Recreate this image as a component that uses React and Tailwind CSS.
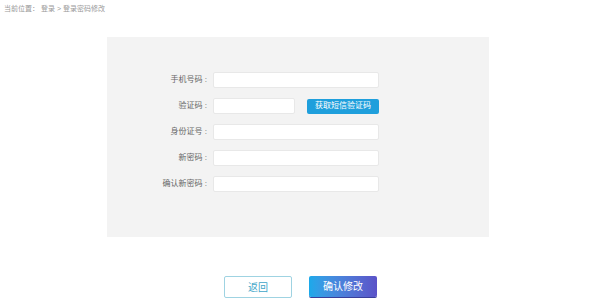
import React from "react";

const font = {
  fontFamily: '"Liberation Sans", "Noto Sans CJK SC", sans-serif',
};

const fields = [
  { label: "手机号码", key: "phone" },
  { label: "验证码", key: "code", sms: true },
  { label: "身份证号", key: "idcard" },
  { label: "新密码", key: "pwd" },
  { label: "确认新密码", key: "pwd2" },
];

function Row({ label, sms }) {
  return (
    <div className="flex h-4 items-center">
      <label className="w-[100px] text-right text-[8px] leading-none text-[#666]">
        {label} :
      </label>
      {sms ? (
        <div className="ml-[6px] flex items-center">
          <input className="h-4 w-[82px] rounded-[2px] border border-[#e8e8e8] bg-white outline-none" />
          <button className="ml-[12px] h-[15px] w-[72px] rounded-[2px] bg-[#1f9fdc] text-[8px] leading-none text-white">
            获取短信验证码
          </button>
        </div>
      ) : (
        <input className="ml-[6px] h-4 w-[166px] rounded-[2px] border border-[#e8e8e8] bg-white outline-none" />
      )}
    </div>
  );
}

export default function App() {
  return (
    <div className="h-[307px] w-[600px] bg-white" style={font}>
      {/* 面包屑 */}
      <div className="pl-[4px] pt-[5px] text-[7px] leading-[7px] text-[#999]">
        当前位置： 登录 &gt; 登录密码修改
      </div>

      {/* 表单 */}
      <div className="ml-[107px] mt-[25px] flex h-[200px] w-[382px] flex-col gap-[10px] bg-[#f3f3f3] pt-[35px]">
        {fields.map((f) => (
          <Row key={f.key} label={f.label} sms={f.sms} />
        ))}
      </div>

      {/* 按钮 */}
      <div className="ml-[224px] mt-[39px] flex gap-[17px]">
        <button className="h-[22px] w-[68px] rounded-[2px] border border-[#9fd3e2] bg-white text-[10px] text-[#3fa6c8]">
          返回
        </button>
        <button className="h-[21px] w-[68px] rounded-[2px] bg-gradient-to-r from-[#1aa9ea] to-[#5a52c8] text-[10px] text-white shadow-[0_1px_0_#3a3f9a]">
          确认修改
        </button>
      </div>
    </div>
  );
}
